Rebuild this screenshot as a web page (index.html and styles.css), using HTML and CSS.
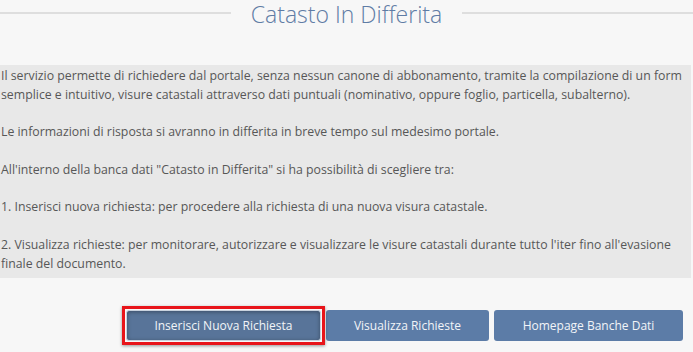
FILE: index.html
```html
<!DOCTYPE html>
<html lang="it">

<head>
  <meta charset="UTF-8" />
  <meta name="viewport" content="width=device-width, initial-scale=1.0" />
  <title>Catasto In Differita</title>
  <link rel="stylesheet" href="styles.css">
</head>

<body>
  <div class="page-title">
    <span class="title-line"></span>
    <h1>Catasto In Differita</h1>
    <span class="title-line"></span>
  </div>

  <div class="info-box">
    <p>Il servizio permette di richiedere dal portale, senza nessun canone di abbonamento, tramite la compilazione di un form semplice e intuitivo, visure catastali attraverso dati puntuali (nominativo, oppure foglio, particella, subalterno).</p>
    <p>Le informazioni di risposta si avranno in differita in breve tempo sul medesimo portale.</p>
    <p>All'interno della banca dati "Catasto in Differita" si ha possibilit&agrave; di scegliere tra:</p>
    <p>1. Inserisci nuova richiesta: per procedere alla richiesta di una nuova visura catastale.</p>
    <p>2. Visualizza richieste: per monitorare, autorizzare e visualizzare le visure catastali durante tutto l'iter fino all'evasione finale del documento.</p>
  </div>

  <div class="actions">
    <button class="btn active">Inserisci Nuova Richiesta</button>
    <button class="btn">Visualizza Richieste</button>
    <button class="btn wide">Homepage Banche Dati</button>
  </div>
</body>

</html>
```

FILE: styles.css
```css
/* Base resets & typography */
* {
  box-sizing: border-box;
  margin: 0;
  padding: 0;
}

body {
  font-family: "Open Sans", Arial, sans-serif;
  background-color: #f7f7f7;
  color: #555;
  width: 693px;
  height: 352px;
  overflow: hidden;
}

.page-title {
  display: flex;
  align-items: center;
  height: 28px;
}

.title-line {
  flex: 1;
  height: 2px;
  background-color: #dedede;
  margin-top: -2px;
}

.page-title h1 {
  font-size: 23px;
  font-weight: 300;
  color: #5f7ca5;
  padding: 0 20px;
  line-height: 28px;
}

.info-box {
  margin-top: 37px;
  width: 691px;
  background-color: #e8e8e8;
  padding: 1px 0 5px 1px;
  font-size: 12.3px;
  line-height: 19px;
  color: #575757;
  height: 213px;
}

.info-box p {
  margin-bottom: 18.4px;
}

.info-box p:last-child {
  margin-bottom: 0;
}

.actions {
  display: flex;
  justify-content: flex-end;
  align-items: center;
  gap: 5px;
  padding: 32px 10px 0 0;
}

.btn {
  height: 31px;
  padding: 0 28px;
  border: none;
  border-radius: 3px;
  background-color: #5c7ca7;
  color: #f2f4f8;
  font-family: "Open Sans", Arial, sans-serif;
  font-size: 12px;
  white-space: nowrap;
  cursor: pointer;
}

/* pressed button, marked with a red frame */
.btn.active {
  position: relative;
  width: 195px;
  padding: 0;
  background-color: #587499;
  border: 1px solid #c9d2de;
  box-shadow: inset 0 1px 4px rgba(0, 0, 0, 0.35);
}

.btn.active::after {
  content: "";
  position: absolute;
  top: -5px;
  left: -5px;
  right: -5px;
  bottom: -5px;
  border: 3px solid #e8141a;
  box-shadow: 0 1px 3px rgba(0, 0, 0, 0.4);
}

.btn.wide {
  width: 189px;
}
```
